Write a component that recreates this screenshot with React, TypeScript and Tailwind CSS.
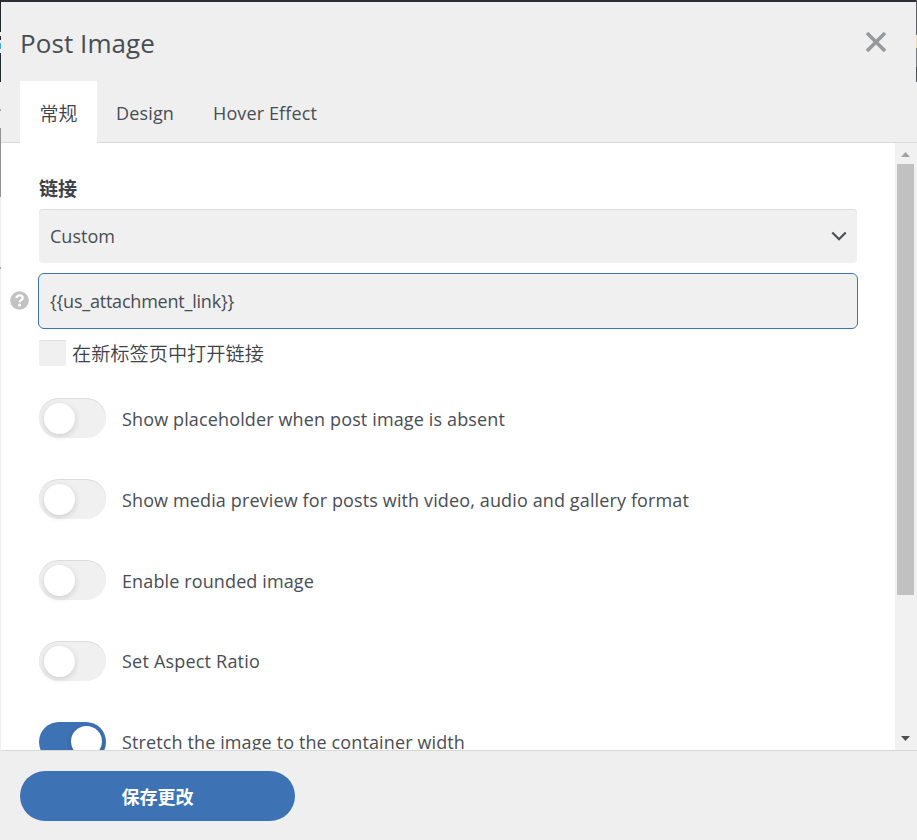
import React from "react";

const LATIN = "font-['Open_Sans','Noto_Sans_CJK_SC',sans-serif]";

const options = [
  { label: "Show placeholder when post image is absent", on: false, width: "w-[383px]", top: "pt-[7px]" },
  { label: "Show media preview for posts with video, audio and gallery format", on: false, width: "w-[567px]", top: "pt-[7px]" },
  { label: "Enable rounded image", on: false, width: "w-[192px]", top: "pt-[7px]" },
  { label: "Set Aspect Ratio", on: false, width: "w-[138px]", top: "pt-[6px]" },
  { label: "Stretch the image to the container width", on: true, width: "w-[343px]", top: "pt-[6px]" },
];

function Toggle({ on }: { on: boolean }) {
  return (
    <span
      className={
        on
          ? "flex h-[40px] w-[67px] shrink-0 items-start justify-end rounded-full bg-[#3d72b4] pt-[4px] pr-[4px]"
          : "flex h-[40px] w-[67px] shrink-0 items-start rounded-full bg-[#f0f0f0] pt-[5px] pl-[5px] shadow-[inset_0_1px_0_#dcdcdc]"
      }
    >
      <span className="size-[31px] rounded-full bg-white shadow-[0_2px_6px_rgba(0,0,0,0.15)]" />
    </span>
  );
}

function FitText({ children, className = "" }: { children: string; className?: string }) {
  const ref = React.useRef<HTMLSpanElement>(null);
  const [spacing, setSpacing] = React.useState(0);
  React.useLayoutEffect(() => {
    const fit = () => {
      const el = ref.current;
      if (!el || !el.parentElement) return;
      el.style.letterSpacing = "0px";
      const room = el.parentElement.getBoundingClientRect().width;
      const value = (room - el.getBoundingClientRect().width) / children.length;
      el.style.letterSpacing = value + "px";
      setSpacing(value);
    };
    fit();
    document.fonts.ready.then(fit);
  }, [children]);
  return (
    <span ref={ref} className={"inline-block whitespace-nowrap " + className} style={{ letterSpacing: spacing }}>
      {children}
    </span>
  );
}

export default function App() {
  return (
    <div className={"flex h-[840px] w-[917px] overflow-hidden bg-[#efefef] text-[18px] text-[#484d55] " + LATIN}>
      <div className="flex w-px shrink-0 flex-col">
        <div className="h-[32px] bg-[#23282d]" />
        <div className="h-[4px] bg-[#efefef]" />
        <div className="h-[4px] bg-[#23282d]" />
        <div className="h-[3px] bg-[#efefef]" />
        <div className="h-[6px] bg-[#3aa9dc]" />
        <div className="h-[4px] bg-[#efefef]" />
        <div className="h-[29px] bg-[#23282d]" />
        <div className="h-[27px]" />
        <div className="h-[2px] bg-[#a8a8a8]" />
        <div className="h-[17px]" />
        <div className="h-[69px] bg-[#929292]" />
        <div className="h-[70px]" />
        <div className="h-[2px] bg-[#aaa]" />
      </div>
      <div className="flex min-w-0 flex-1 flex-col border-t-2 border-[#2b2e35]">
        <header className="flex h-[141px] shrink-0 flex-col border-b border-[#d8d8d8]">
          <div className="flex h-[79px] shrink-0 items-start justify-between pt-[23px] pr-[30px] pl-[19px]">
            <h1 className="w-[135px] text-[26px] leading-[36px] font-normal">
              <FitText>Post Image</FitText>
            </h1>
            <svg className="mt-[6px] size-[22px]" viewBox="0 0 22 22" fill="none" stroke="#95989d" strokeWidth="3.6">
              <path d="M2 2 20 20M20 2 2 20" />
            </svg>
          </div>
          <nav className="flex h-[62px] shrink-0 pl-[19px] leading-[28px]">
            <div className="flex w-[77px] shrink-0 items-center justify-center bg-white pt-[3px] text-[19px] font-[350] text-[#3d424a]">常规</div>
            <div className="flex pt-[18px] pl-[19px]">
              <div className="w-[58px]"><FitText>Design</FitText></div>
              <div className="ml-[39px] w-[104px]"><FitText>Hover Effect</FitText></div>
            </div>
          </nav>
        </header>

        <div className="flex h-[607px] shrink-0">
          <main className="flex h-[607px] w-[894px] flex-col overflow-hidden bg-white pl-[37px]">
            <h2 className="mt-[32px] ml-px h-[28px] shrink-0 text-[19px] leading-[28px] font-bold text-[#3d424a]">链接</h2>
            <div className="mt-[6px] ml-px flex h-[54px] w-[818px] shrink-0 items-center justify-between rounded-[4px] bg-[#f0f0f0] pr-[10px] pl-[11px] shadow-[inset_0_1px_0_#dcdcdc]">
              <div className="w-[65px]"><FitText>Custom</FitText></div>
              <svg className="h-[10px] w-[16px]" viewBox="0 0 16 10" fill="none" stroke="#4c5056" strokeWidth="2.2">
                <path d="m1.3 1.5 6.7 6.7 6.7-6.7" />
              </svg>
            </div>
            <div className="relative mt-[10px] flex h-[56px] w-[820px] shrink-0 items-center rounded-[6px] border border-[#3d72b4] bg-[#f0f0f0] pl-[11px]">
              <div className="w-[184px]"><FitText>{"{{us_attachment_link}}"}</FitText></div>
              <svg className="absolute top-[17px] -left-[29px] size-[19px]" viewBox="0 0 19 19">
                <circle cx="9.5" cy="9.5" r="9.3" fill="#c2c2c2" />
                <path d="M6.4 7.1c.4-2 1.6-2.8 3.2-2.8 1.8 0 3.1 1 3.1 2.6 0 2.3-3 2.2-3 4.3" fill="none" stroke="#fff" strokeWidth="2.3" />
                <circle cx="9.6" cy="13.9" r="1.5" fill="#fff" />
              </svg>
            </div>
            <label className="mt-[11px] ml-px flex h-[27px] shrink-0 items-start">
              <span className="h-[26px] w-[27px] rounded-[2px] bg-[#f0f0f0] shadow-[inset_0_1px_0_#e0e0e0]" />
              <span className="ml-[6px] text-[19.2px] leading-[28px] font-[350] text-[#3d424a]">在新标签页中打开链接</span>
            </label>
            <div className="mt-[31px] ml-px flex shrink-0 flex-col gap-[41px]">
              {options.map(({ label, on, width, top }) => (
                <label key={label} className="flex h-[40px] items-start">
                  <Toggle on={on} />
                  <span className={"ml-[16px] leading-[28px] " + width + " " + top}>
                    <FitText>{label}</FitText>
                  </span>
                </label>
              ))}
            </div>
          </main>
          <div className="flex w-[22px] flex-col items-center bg-[#f1f1f1] pr-[2px]">
            <svg className="h-[21px] w-[17px] shrink-0" viewBox="0 0 17 21"><path d="M4 14 8.5 9l4.5 5Z" fill="#a3a3a3" /></svg>
            <div className="h-[431px] w-[17px] shrink-0 bg-[#c1c1c1]" />
            <svg className="mt-auto h-[21px] w-[17px] shrink-0" viewBox="0 0 17 21"><path d="m4 7 4.5 5L13 7Z" fill="#505050" /></svg>
          </div>
        </div>

        <footer className="flex flex-1 items-start border-t border-[#d8d8d8] pt-[20px] pl-[19px]">
          <button className="h-[50px] w-[275px] rounded-full bg-[#3d72b4] pt-[2px] text-[18px] leading-[28px] font-bold text-white">保存更改</button>
        </footer>
      </div>
      <div className="-ml-px flex w-px shrink-0 flex-col">
        <div className="h-[35px] bg-[#59606a]" />
        <div className="h-[13px] bg-[#f2dfae]" />
        <div className="h-[19px] bg-[#7b8088]" />
        <div className="h-[15px] bg-[#4b4f56]" />
      </div>
    </div>
  );
}
